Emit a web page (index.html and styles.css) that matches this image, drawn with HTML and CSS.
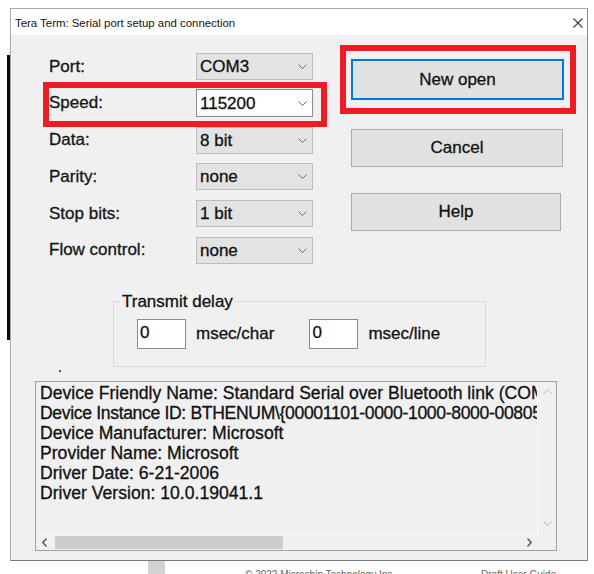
FILE: index.html
```html
<!DOCTYPE html>
<html>
<head>
<meta charset="utf-8">
<title>Tera Term: Serial port setup and connection</title>
<link rel="stylesheet" href="styles.css">
</head>
<body>
<div class="screen">
  <div class="side"><div class="blackbar"></div></div>
  <div class="window">
    <div class="titlebar">
      <span class="title">Tera Term: Serial port setup and connection</span>
      <svg class="close" width="10" height="10" viewBox="0 0 10 10"><path d="M0.5 0.5 L9.5 9.5 M9.5 0.5 L0.5 9.5" stroke="#3a3a3a" stroke-width="1.1" fill="none"/></svg>
    </div>
    <div class="client">
      <div class="top">
        <div class="form">
          <span class="label">Port:</span>
          <div class="select">COM3<svg class="chev" width="9" height="5" viewBox="0 0 9 5"><path d="M0.5 0.5 L4.5 4.5 L8.5 0.5" stroke="#6a6a6a" fill="none"/></svg></div>
          <span class="label">Speed:</span>
          <div class="select active">115200<svg class="chev" width="9" height="5" viewBox="0 0 9 5"><path d="M0.5 0.5 L4.5 4.5 L8.5 0.5" stroke="#6a6a6a" fill="none"/></svg></div>
          <span class="label">Data:</span>
          <div class="select">8 bit<svg class="chev" width="9" height="5" viewBox="0 0 9 5"><path d="M0.5 0.5 L4.5 4.5 L8.5 0.5" stroke="#6a6a6a" fill="none"/></svg></div>
          <span class="label">Parity:</span>
          <div class="select">none<svg class="chev" width="9" height="5" viewBox="0 0 9 5"><path d="M0.5 0.5 L4.5 4.5 L8.5 0.5" stroke="#6a6a6a" fill="none"/></svg></div>
          <span class="label">Stop bits:</span>
          <div class="select">1 bit<svg class="chev" width="9" height="5" viewBox="0 0 9 5"><path d="M0.5 0.5 L4.5 4.5 L8.5 0.5" stroke="#6a6a6a" fill="none"/></svg></div>
          <span class="label">Flow control:</span>
          <div class="select">none<svg class="chev" width="9" height="5" viewBox="0 0 9 5"><path d="M0.5 0.5 L4.5 4.5 L8.5 0.5" stroke="#6a6a6a" fill="none"/></svg></div>
        </div>
        <div class="buttons">
          <div class="btn btn-default">New open</div>
          <div class="btn btn-cancel">Cancel</div>
          <div class="btn btn-help">Help</div>
        </div>
      </div>
      <fieldset class="delay">
        <legend>Transmit delay</legend>
        <div class="delay-row">
          <div class="num">0</div><span class="unit">msec/char</span>
          <div class="num num-2">0</div><span class="unit">msec/line</span>
        </div>
      </fieldset>
      <div class="dotrow"><span class="dot"></span></div>
      <div class="info">
        <div class="info-text">
          <div>Device Friendly Name: Standard Serial over Bluetooth link (COM3)</div>
          <div class="tight">Device Instance ID: BTHENUM\{00001101-0000-1000-8000-00805F9B34FB}</div>
          <div>Device Manufacturer: Microsoft</div>
          <div>Provider Name: Microsoft</div>
          <div>Driver Date: 6-21-2006</div>
          <div>Driver Version: 10.0.19041.1</div>
        </div>
        <div class="vscroll">
          <svg width="9" height="5" viewBox="0 0 9 5"><path d="M0.5 4.5 L4.5 0.5 L8.5 4.5" stroke="#b5b5b5" fill="none"/></svg>
          <svg width="9" height="5" viewBox="0 0 9 5"><path d="M0.5 0.5 L4.5 4.5 L8.5 0.5" stroke="#b5b5b5" fill="none"/></svg>
        </div>
        <div class="hscroll">
          <span class="harrow"><svg width="5" height="9" viewBox="0 0 5 9"><path d="M4.5 0.5 L0.8 4.5 L4.5 8.5" stroke="#555" stroke-width="1.4" fill="none"/></svg></span>
          <span class="thumb"></span>
          <span class="hspace"></span>
          <span class="harrow"><svg width="5" height="9" viewBox="0 0 5 9"><path d="M0.5 0.5 L4.2 4.5 L0.5 8.5" stroke="#555" stroke-width="1.4" fill="none"/></svg></span>
        </div>
        <div class="corner"></div>
      </div>
      <div class="mark mark-speed"></div>
      <div class="mark mark-open"></div>
    </div>
  </div>
</div>
<div class="footer">
  <span class="strip"></span>
  <span class="foot foot-1">© 2022 Microchip Technology Inc.</span>
  <span class="foot foot-2">Draft User Guide</span>
</div>
</body>
</html>
```

FILE: styles.css
```css
* { box-sizing: border-box; }
html, body {
  margin: 0;
  padding: 0;
  background: #ffffff;
}
body {
  width: 594px;
  height: 574px;
  overflow: hidden;
  font-family: "Liberation Sans", Arial, sans-serif;
  color: #111;
}
.screen {
  display: flex;
  padding-top: 8px;
  height: 561px;
}
.side {
  width: 10px;
  flex: none;
}
.blackbar {
  margin-top: 47px;
  margin-left: 7px;
  width: 3px;
  height: 285px;
  background: #0a0a0a;
}
.window {
  width: 578px;
  height: 553px;
  border: 1px solid #a9a9a9;
  border-right-color: #8a8a8a;
  border-bottom-color: #7a7a7a;
  display: flex;
  flex-direction: column;
  background: #f0f0f0;
}
.titlebar {
  height: 26px;
  flex: none;
  background: #ffffff;
  display: flex;
  align-items: center;
  justify-content: space-between;
  padding: 0 4px 0 4px;
}
.title {
  font-size: 11.4px;
  color: #111;
  padding-top: 1px;
}
.close { margin-right: 0; margin-top: 1px; }
.client {
  position: relative;
  flex: 1;
  background: #f0f0f0;
}
.top {
  display: flex;
  align-items: flex-start;
  padding-left: 38px;
}
.form {
  margin-top: 18px;
  display: grid;
  grid-template-columns: 147px 117px;
  grid-auto-rows: 27px;
  row-gap: 9.8px;
  align-items: center;
}
.label, .select, .btn, .delay legend, .unit, .num, .info-text {
  -webkit-text-stroke: 0.3px currentColor;
}
.label {
  font-size: 17px;
  line-height: 20px;
  color: #141414;
}
.select {
  height: 27px;
  border: 1px solid #bdbdbd;
  background: #e3e3e3;
  font-size: 17px;
  line-height: 25px;
  padding-left: 3px;
  display: flex;
  align-items: center;
  justify-content: space-between;
  padding-right: 5px;
  color: #111;
}
.select.active {
  background: #ffffff;
  border-color: #8c8c8c;
  height: 28px;
}
.chev { flex: none; }
.buttons {
  margin-left: 38px;
  margin-top: 24px;
  display: flex;
  flex-direction: column;
}
.btn {
  display: flex;
  align-items: center;
  justify-content: center;
  background: #e1e1e1;
  border: 1px solid #adadad;
  font-size: 17px;
  color: #111;
}
.btn-default {
  width: 213px;
  height: 41px;
  border: 2px solid #0078d7;
}
.btn-cancel {
  width: 212px;
  height: 38px;
  margin-top: 29px;
}
.btn-help {
  width: 210px;
  height: 38px;
  margin-top: 26px;
}
.delay {
  margin: 28px 0 0 102px;
  width: 373px;
  border: 1px solid #d9d9d9;
  padding: 7px 0 17px 6px;
  min-width: 0;
}
.delay legend {
  font-size: 17px;
  line-height: 20px;
  padding: 0 2px;
  color: #111;
}
.delay-row {
  display: flex;
  align-items: center;
  padding-left: 17px;
}
.num {
  width: 49px;
  height: 30px;
  background: #ffffff;
  border: 1px solid #8a8a8a;
  font-size: 17px;
  line-height: 26px;
  padding-left: 2px;
  color: #111;
}
.num-2 { margin-left: 35px; }
.unit {
  margin-left: 10px;
  font-size: 17px;
  color: #111;
}
.dotrow {
  height: 14px;
  padding-left: 48px;
  padding-top: 3px;
}
.dot {
  display: block;
  width: 2px;
  height: 2px;
  background: #3a3aff;
}
.info {
  margin-left: 24px;
  width: 522px;
  height: 170px;
  border: 1px solid #a0a0a0;
  display: grid;
  grid-template-columns: 1fr 18px;
  grid-template-rows: 1fr 15px;
  background: #f0f0f0;
}
.info-text {
  overflow: hidden;
  white-space: nowrap;
  padding: 1px 0 0 4px;
  font-size: 17.6px;
  line-height: 20px;
  color: #111;
  border-right: 1px solid #fbfbfb;
  border-bottom: 1px solid #fbfbfb;
}
.info-text .tight { letter-spacing: -0.35px; }
.vscroll {
  display: flex;
  flex-direction: column;
  align-items: center;
  justify-content: space-between;
  padding: 7px 0 9px 0;
}
.hscroll {
  display: flex;
  align-items: center;
}
.harrow {
  width: 17px;
  height: 15px;
  display: flex;
  align-items: center;
  justify-content: center;
  flex: none;
}
.thumb {
  width: 228px;
  height: 13px;
  background: #cdcdcd;
  margin-left: 2px;
  flex: none;
}
.hspace { flex: 1; }
.corner { background: #f0f0f0; }
.mark {
  position: absolute;
  border: 6px solid #ed1c24;
}
.mark-speed {
  left: 32px;
  top: 47px;
  width: 284px;
  height: 45px;
}
.mark-open {
  left: 329px;
  top: 10px;
  width: 236px;
  height: 69px;
}
.footer {
  height: 13px;
  display: flex;
  align-items: flex-start;
  overflow: hidden;
}
.strip {
  margin-left: 148px;
  width: 17px;
  height: 13px;
  background: #d2d2d2;
  flex: none;
}
.foot {
  font-size: 10px;
  line-height: 12px;
  color: #666;
  padding-top: 8px;
  white-space: nowrap;
}
.foot-1 { margin-left: 80px; }
.foot-2 { margin-left: 86px; }
```
